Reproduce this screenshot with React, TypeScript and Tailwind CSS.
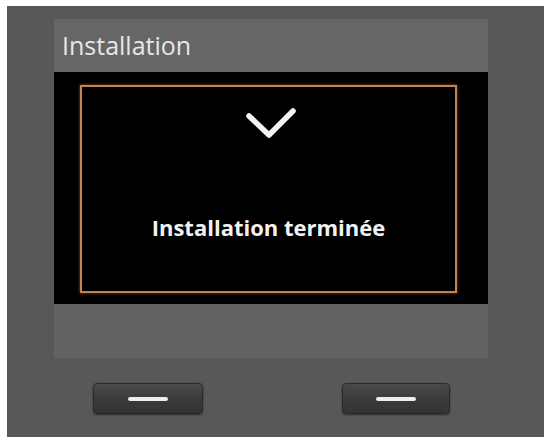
import React from 'react';

const SoftKey: React.FC<{ className?: string }> = ({ className = '' }) => (
  <button
    className={`h-[31px] rounded-[4px] border border-[#2a2a2a] bg-gradient-to-b from-[#4a4a4a] via-[#3b3b3b] to-[#333333] shadow-[0_1px_2px_rgba(0,0,0,0.5)] flex items-center justify-center ${className}`}
  >
    <span className="block w-[40px] h-[4px] rounded-full bg-[#ececec]" />
  </button>
);

export default function App() {
  return (
    <div className="w-[548px] h-[440px] bg-white pt-[6px] pl-[7px] font-['Open_Sans',sans-serif]">
      <div className="w-[537px] h-[431px] bg-[#585858] pt-[13px] flex flex-col">
        {/* Screen */}
        <div className="ml-[47px] w-[434px] flex flex-col">
          <div className="h-[53px] bg-[#666666] flex items-center pl-[8px]">
            <span className="text-[25px] text-[#e6e6e6] leading-none">Installation</span>
          </div>
          <div className="h-[232px] bg-black pt-[13px] pl-[26px] pr-[31px]">
            <div className="h-[208px] border-2 border-[#c9814b] shadow-[0_0_3px_rgba(201,129,75,0.6)] flex flex-col items-center">
              <svg width="60" height="40" viewBox="0 0 60 40" className="mt-[16px] ml-[4px]">
                <path d="M8 13 L28 32 L52 8" fill="none" stroke="#f4f4f4" strokeWidth="5.5" strokeLinecap="round" strokeLinejoin="round" />
              </svg>
              <p className="mt-[73px] text-[22px] font-bold text-[#f2f2f2] leading-none">Installation terminée</p>
            </div>
          </div>
          <div className="h-[54px] bg-[#636363]" />
        </div>
        {/* Soft keys */}
        <div className="flex mt-[25px]">
          <SoftKey className="ml-[86px] w-[110px]" />
          <SoftKey className="ml-[139px] w-[108px]" />
        </div>
      </div>
    </div>
  );
}
